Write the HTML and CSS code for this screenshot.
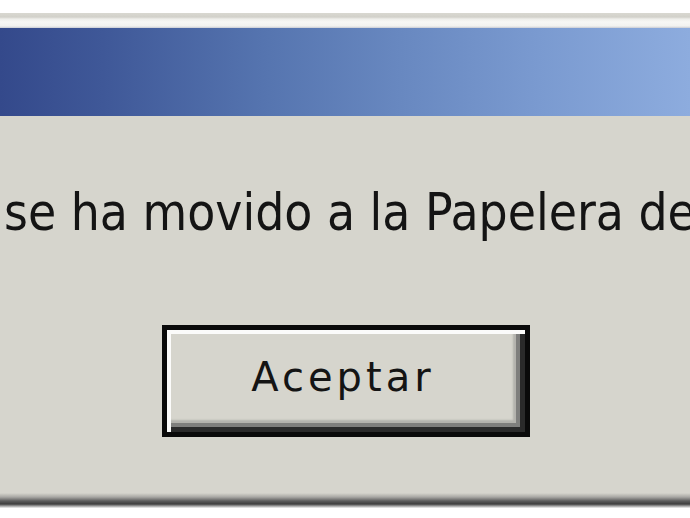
FILE: index.html
```
<!DOCTYPE html>
<html lang="es">
<head>
<meta charset="utf-8">
<title>Papelera de reciclaje</title>
<link rel="stylesheet" href="styles.css">
</head>
<body>
<div class="window">
  <div class="frame-top"></div>
  <div class="titlebar"></div>
  <div class="content">
    <p class="message">se ha movido a la Papelera de reciclaje.</p>
    <div class="actions">
      <button class="btn" type="button"><span class="btn-label">Aceptar</span></button>
    </div>
  </div>
  <div class="frame-bottom"></div>
</div>
</body>
</html>
```
FILE: styles.css
```
html, body {
  margin: 0;
  padding: 0;
  background: #ffffff;
  width: 690px;
  height: 518px;
  overflow: hidden;
}

.window {
  margin-top: 13px;
  width: 690px;
  overflow: hidden;
}

.frame-top {
  height: 15px;
  background: linear-gradient(to bottom, #d9d8d1 0, #d2d1ca 4px, #eeeeea 6px, #f7f7f5 9px, #f2f2ef 13px, #c9cbd4 15px);
}

.titlebar {
  height: 88px;
  background: linear-gradient(to right, #34498b 0%, #3f5898 15%, #5574af 38%, #6888c0 58%, #7a9ad0 78%, #8dacde 100%);
}

.content {
  height: 377px;
  background: #d6d5cd;
  box-sizing: border-box;
  padding-top: 71px;
}

.message {
  margin: 0;
  padding-left: 4px;
  font-family: "DejaVu Sans", "Liberation Sans", sans-serif;
  font-stretch: condensed;
  font-size: 51px;
  line-height: 51px;
  color: #141414;
  white-space: nowrap;
}

.actions {
  display: flex;
  justify-content: center;
  margin-top: 87px;
}

.btn {
  width: 368px;
  height: 112px;
  box-sizing: border-box;
  margin: 0 0 0 2px;
  padding: 27px 0 0 0;
  display: flex;
  justify-content: center;
  align-items: flex-start;
  background: #d6d5cd;
  border: 5px solid #0a0a0a;
  border-radius: 0;
  box-shadow:
    inset 4px 4px 0 #fbfbfa,
    inset -5px -5px 0 #2a2a2a,
    inset -9px -9px 0 #7f7f7d,
    inset -12px -12px 2px #b4b3ad;
  font-family: "DejaVu Sans", "Liberation Sans", sans-serif;
  font-size: 40px;
  line-height: 40px;
  letter-spacing: 4px;
  color: #141414;
}

.btn-label {
  margin-left: -6px;
}

.frame-bottom {
  height: 15px;
  background: linear-gradient(to bottom, #d6d5cd 0, #a9a8a4 4px, #5c5c5c 8px, #3e3e3e 11px, #9d9d9d 13px, #f4f4f4 15px);
}
```
